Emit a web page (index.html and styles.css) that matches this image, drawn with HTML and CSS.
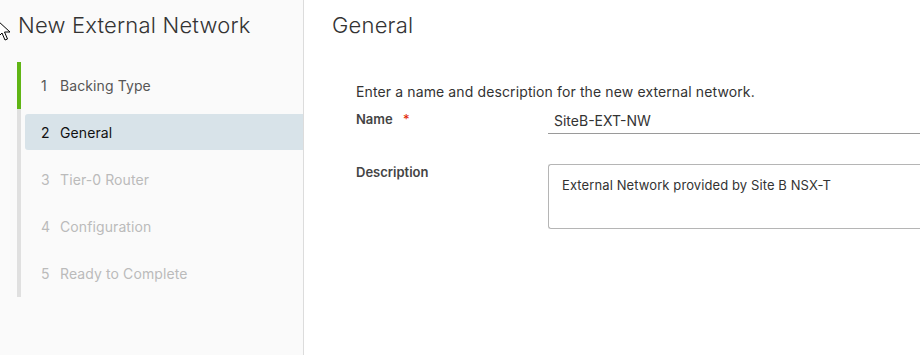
FILE: index.html
```html
<!DOCTYPE html>
<html>
<head>
<meta charset="utf-8">
<link rel="stylesheet" href="styles.css">
</head>
<body>
<div class="wizard">
  <aside class="sidebar">
    <h1 class="wiz-title">New External Network</h1>
    <ol class="steps">
      <li class="step done"><span class="num">1</span><span class="lbl">Backing Type</span></li>
      <li class="step current"><span class="num">2</span><span class="lbl">General</span></li>
      <li class="step"><span class="num">3</span><span class="lbl">Tier-0 Router</span></li>
      <li class="step"><span class="num">4</span><span class="lbl">Configuration</span></li>
      <li class="step"><span class="num">5</span><span class="lbl">Ready to Complete</span></li>
    </ol>
  </aside>
  <main class="content">
    <h2 class="page-title">General</h2>
    <p class="intro">Enter a name and description for the new external network.</p>
    <div class="form-row">
      <label class="form-label">Name <span class="req">*</span></label>
      <div class="input">SiteB-EXT-NW</div>
    </div>
    <div class="form-row desc-row">
      <label class="form-label">Description</label>
      <div class="textarea">External Network provided by Site B NSX-T</div>
    </div>
  </main>
</div>
<svg class="cursor" width="16" height="22" viewBox="0 0 16 22"><path d="M1 1 L1 17 L5 13 L8 20 L10.5 19 L7.5 12 L13 12 Z" fill="#fff" stroke="#000" stroke-width="1"/></svg>
</body>
</html>
```
FILE: styles.css
```css
html, body { margin: 0; padding: 0; background: #fff; }
body { font-family: "Inter", "Lato", sans-serif; color: #333; width: 920px; height: 355px; overflow: hidden; position: relative; }
.wizard { display: flex; height: 355px; }
.sidebar { width: 304px; background: #fafafa; border-right: 1px solid #dcdcdc; box-sizing: border-box; flex: none; }
.wiz-title { margin: 11px 0 0 18px; font-size: 22px; font-weight: 300; color: #333; line-height: 28px; letter-spacing: 0.2px; }
.steps { list-style: none; margin: 23px 0 0 17px; padding: 0; border-left: 4px solid #e0e0e0; }
.step { height: 47px; display: flex; align-items: center; font-size: 14px; color: #bbb; margin-left: 4px; padding-left: 16px; border-radius: 3px 0 0 3px; letter-spacing: 0.1px; }
.step .num { width: 19px; }
.step.done { color: #565656; margin-left: -4px; padding-left: 20px; border-left: 4px solid #60b515; border-radius: 0; }
.step.current { color: #111; background: #d8e3e9; height: 36px; margin: 5px 0 6px 4px; }
.content { flex: 1; padding-left: 28px; }
.page-title { margin: 11px 0 0; font-size: 22px; font-weight: 300; line-height: 28px; color: #333; letter-spacing: 0.2px; }
.intro { margin: 44px 0 0 24px; font-size: 14px; line-height: 18px; color: #333; letter-spacing: 0.12px; }
.form-row { display: flex; margin-left: 24px; }
.form-label { width: 192px; font-size: 13px; font-weight: 600; color: #444; flex: none; }
.req { color: #e12200; margin-left: 7px; font-weight: 400; }
.form-row:first-of-type { margin-top: 10px; }
.input { flex: 1; font-size: 14px; padding: 0 6px; height: 22px; line-height: 20px; border-bottom: 1px solid #9a9a9a; }
.desc-row { margin-top: 30px; }
.textarea { flex: 1; height: 65px; border: 1px solid #b5b5b5; border-right: none; border-radius: 3px 0 0 3px; font-size: 13px; padding: 12px 13px; box-sizing: border-box; letter-spacing: 0.1px; }
.cursor { position: absolute; left: -3px; top: 20px; }
```
